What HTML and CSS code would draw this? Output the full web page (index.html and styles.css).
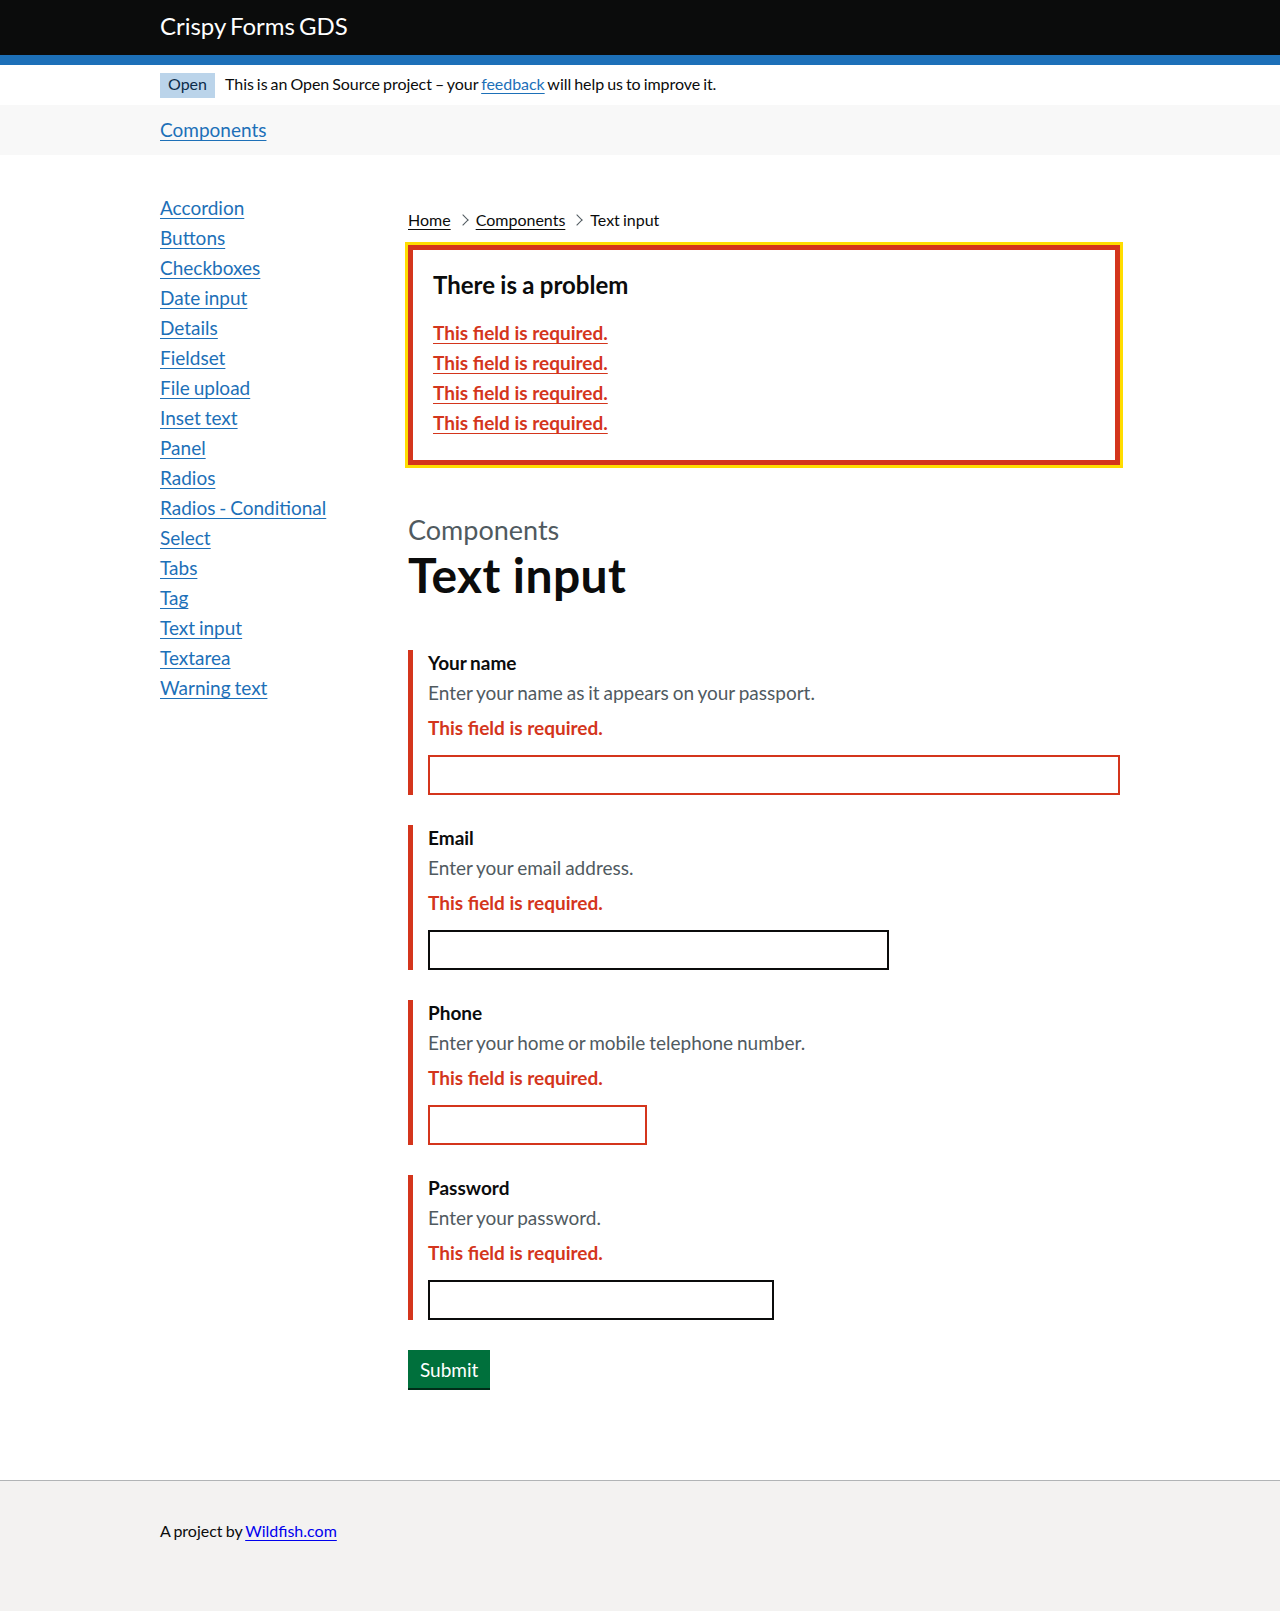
FILE: index.html
```html
<!DOCTYPE html>
<html lang="en">
<head>
<meta charset="utf-8">
<title>Text input - Crispy Forms GDS</title>
<link rel="stylesheet" href="styles.css">
</head>
<body>
<header class="header">
  <div class="container header-inner">
    <a class="logo" href="#">Crispy Forms GDS</a>
  </div>
</header>
<div class="container phase">
  <strong class="tag">Open</strong>
  <span class="phase-text">This is an Open Source project – your <a class="link" href="#">feedback</a> will help us to improve it.</span>
</div>
<nav class="subnav">
  <div class="container">
    <a class="link subnav-link" href="#">Components</a>
  </div>
</nav>
<div class="container layout">
  <aside class="sidebar">
    <ul class="side-list">
      <li><a class="link" href="#">Accordion</a></li>
      <li><a class="link" href="#">Buttons</a></li>
      <li><a class="link" href="#">Checkboxes</a></li>
      <li><a class="link" href="#">Date input</a></li>
      <li><a class="link" href="#">Details</a></li>
      <li><a class="link" href="#">Fieldset</a></li>
      <li><a class="link" href="#">File upload</a></li>
      <li><a class="link" href="#">Inset text</a></li>
      <li><a class="link" href="#">Panel</a></li>
      <li><a class="link" href="#">Radios</a></li>
      <li><a class="link" href="#">Radios - Conditional</a></li>
      <li><a class="link" href="#">Select</a></li>
      <li><a class="link" href="#">Tabs</a></li>
      <li><a class="link" href="#">Tag</a></li>
      <li><a class="link" href="#">Text input</a></li>
      <li><a class="link" href="#">Textarea</a></li>
      <li><a class="link" href="#">Warning text</a></li>
    </ul>
  </aside>
  <main class="main">
    <ol class="breadcrumbs">
      <li class="crumb"><a class="crumb-link" href="#">Home</a></li>
      <li class="crumb"><a class="crumb-link" href="#">Components</a></li>
      <li class="crumb">Text input</li>
    </ol>
    <div class="error-summary">
      <h2 class="error-title">There is a problem</h2>
      <ul class="error-list">
        <li><a class="error-link" href="#">This field is required.</a></li>
        <li><a class="error-link" href="#">This field is required.</a></li>
        <li><a class="error-link" href="#">This field is required.</a></li>
        <li><a class="error-link" href="#">This field is required.</a></li>
      </ul>
    </div>
    <span class="caption">Components</span>
    <h1 class="heading">Text input</h1>
    <form class="form">
      <div class="form-group">
        <label class="label" for="name">Your name</label>
        <div class="hint">Enter your name as it appears on your passport.</div>
        <p class="error-message">This field is required.</p>
        <input class="input input-error w-full" id="name" type="text">
      </div>
      <div class="form-group">
        <label class="label" for="email">Email</label>
        <div class="hint">Enter your email address.</div>
        <p class="error-message">This field is required.</p>
        <input class="input w-two-thirds" id="email" type="email">
      </div>
      <div class="form-group">
        <label class="label" for="phone">Phone</label>
        <div class="hint">Enter your home or mobile telephone number.</div>
        <p class="error-message">This field is required.</p>
        <input class="input input-error w-10" id="phone" type="tel">
      </div>
      <div class="form-group">
        <label class="label" for="password">Password</label>
        <div class="hint">Enter your password.</div>
        <p class="error-message">This field is required.</p>
        <input class="input w-half" id="password" type="password">
      </div>
      <div class="actions">
        <button class="button" type="submit">Submit</button>
      </div>
    </form>
  </main>
</div>
<footer class="footer">
  <div class="container">
    <p class="footer-text">A project by <a class="footer-link" href="#">Wildfish.com</a></p>
  </div>
</footer>
</body>
</html>
```

FILE: styles.css
```css
* { box-sizing: border-box; }

html, body {
  margin: 0;
  padding: 0;
}

body {
  font-family: Lato, "Liberation Sans", Arial, sans-serif;
  color: #0b0c0c;
  background: #ffffff;
  word-spacing: -1px;
  -webkit-font-smoothing: antialiased;
}

.container {
  width: 960px;
  margin: 0 auto;
}

.link {
  color: #1d70b8;
  text-decoration: underline;
  text-decoration-thickness: 1px;
  text-underline-offset: 0.16em;
}

/* Header */
.header {
  background: #0b0c0c;
  border-bottom: 10px solid #1d70b8;
}

.header-inner {
  height: 55px;
  display: flex;
  align-items: center;
  padding-bottom: 3px;
}

.logo {
  color: #ffffff;
  text-decoration: none;
  font-size: 24px;
  line-height: 30px;
  word-spacing: -2px;
}

/* Phase banner */
.phase {
  display: flex;
  align-items: center;
  padding: 8px 0 7px;
  font-size: 16px;
  line-height: 20px;
}

.tag {
  display: inline-block;
  background: #bbd4ea;
  color: #0c2d4a;
  font-weight: 400;
  font-size: 16px;
  line-height: 16px;
  padding: 3px 8px 6px;
  margin-right: 10px;
}

.phase-text {
  padding-bottom: 4px;
  letter-spacing: -0.05px;
}

/* Sub navigation */
.subnav {
  background: #f8f8f8;
}

.subnav .container {
  padding: 12px 0 13px;
}

.subnav-link {
  font-size: 19px;
  line-height: 25px;
}

/* Layout */
.layout {
  display: grid;
  grid-template-columns: 248px 712px;
  padding: 40px 0 60px;
}

.side-list {
  list-style: none;
  margin: 0;
  padding: 0;
}

.side-list li {
  font-size: 19px;
  line-height: 25px;
  margin-bottom: 5px;
}

/* Breadcrumbs */
.breadcrumbs {
  list-style: none;
  margin: 15px 0 0;
  padding: 0;
  display: flex;
  font-size: 16px;
  line-height: 20px;
}

.crumb {
  display: flex;
  align-items: center;
}

.crumb + .crumb::before {
  content: "";
  display: block;
  width: 7px;
  height: 7px;
  border-style: solid;
  border-color: #505a5f;
  border-width: 1px 1px 0 0;
  transform: rotate(45deg);
  margin: 0 9px 0 8px;
}

.crumb-link {
  color: #0b0c0c;
  text-decoration: underline;
  text-decoration-thickness: 1px;
  text-underline-offset: 0.16em;
}

/* Error summary */
.error-summary {
  margin: 15px 0 50px;
  border: 5px solid #d4351c;
  outline: 3px solid #ffdd00;
  padding: 20px;
}

.error-title {
  margin: 0 0 20px;
  font-size: 24px;
  line-height: 30px;
  font-weight: 700;
  word-spacing: -0.5px;
}

.error-list {
  list-style: none;
  margin: 0;
  padding: 0;
}

.error-list li {
  font-size: 19px;
  line-height: 25px;
  margin-bottom: 5px;
  font-weight: 700;
  word-spacing: 0;
}

.error-link {
  color: #d4351c;
  text-decoration: underline;
  text-decoration-thickness: 1px;
  text-underline-offset: 0.16em;
}

/* Headings */
.caption {
  display: block;
  color: #505a5f;
  font-size: 27px;
  line-height: 30px;
  margin-bottom: 5px;
}

.heading {
  margin: 0 0 50px;
  font-size: 48px;
  line-height: 50px;
  font-weight: 700;
  word-spacing: 0;
  letter-spacing: 0.4px;
}

/* Form */
.form-group {
  border-left: 5px solid #d4351c;
  padding-left: 15px;
  margin-bottom: 30px;
  display: flex;
  flex-direction: column;
  align-items: flex-start;
}

.label {
  font-size: 19px;
  line-height: 25px;
  font-weight: 700;
  margin-bottom: 5px;
}

.hint {
  font-size: 19px;
  line-height: 25px;
  color: #505a5f;
  margin-bottom: 10px;
}

.error-message {
  margin: 0 0 15px;
  font-size: 19px;
  line-height: 25px;
  font-weight: 700;
  color: #d4351c;
  word-spacing: 0;
}

.input {
  height: 40px;
  border: 2px solid #0b0c0c;
  border-radius: 0;
  padding: 5px;
  font-family: inherit;
  font-size: 19px;
  background: #ffffff;
  margin: 0;
}

.input-error {
  border-color: #d4351c;
}

.w-full { width: 100%; }
.w-two-thirds { width: 66.66%; }
.w-half { width: 50%; }
.w-10 { width: 11.5em; }

.actions {
  display: flex;
  margin-bottom: 32px;
}

.button {
  font-family: inherit;
  font-size: 19px;
  line-height: 19px;
  color: #ffffff;
  background: #00703c;
  border: 2px solid transparent;
  border-radius: 0;
  padding: 8px 10px 7px;
  box-shadow: 0 2px 0 #002d18;
  cursor: pointer;
}

/* Footer */
.footer {
  background: #f3f2f1;
  border-top: 1px solid #b1b4b6;
  padding: 40px 0 70px;
}

.footer-text {
  margin: 0;
  font-size: 16px;
  line-height: 20px;
}

.footer-link {
  color: #0000ee;
  text-decoration: underline;
  text-decoration-thickness: 1px;
  text-underline-offset: 0.16em;
}
```
